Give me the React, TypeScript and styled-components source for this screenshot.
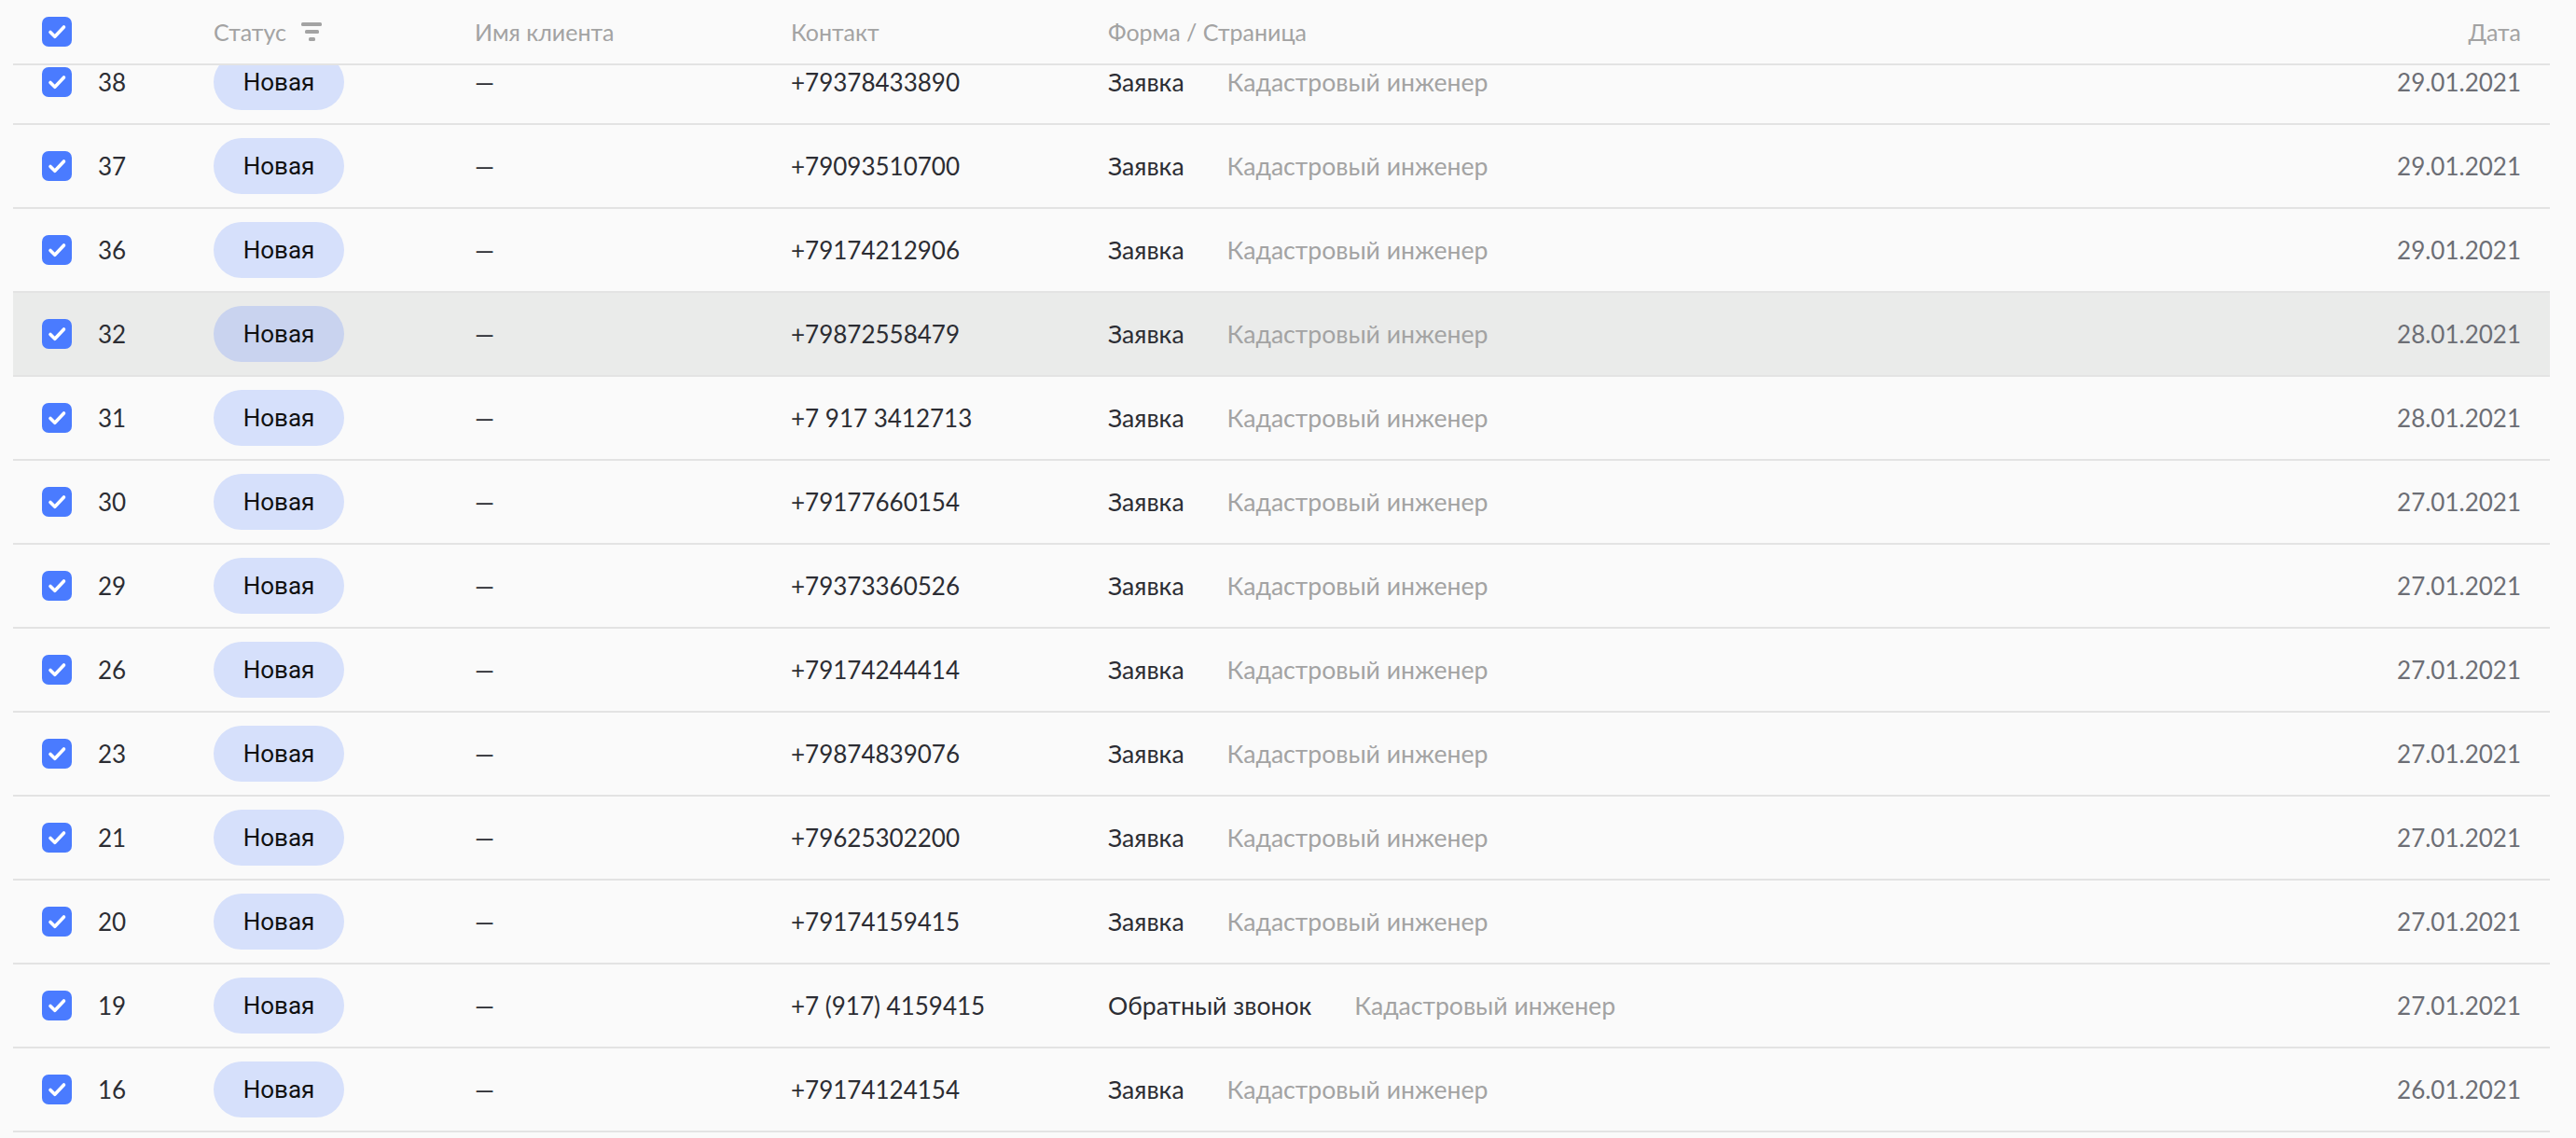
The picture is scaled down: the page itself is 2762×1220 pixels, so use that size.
import styled, { createGlobalStyle } from "styled-components";

type Lead = {
  id: number;
  phone: string;
  form: string;
  date: string;
};

const leads: Lead[] = [
  { id: 38, phone: "+79378433890", form: "Заявка", date: "29.01.2021" },
  { id: 37, phone: "+79093510700", form: "Заявка", date: "29.01.2021" },
  { id: 36, phone: "+79174212906", form: "Заявка", date: "29.01.2021" },
  { id: 32, phone: "+79872558479", form: "Заявка", date: "28.01.2021" },
  { id: 31, phone: "+7 917 3412713", form: "Заявка", date: "28.01.2021" },
  { id: 30, phone: "+79177660154", form: "Заявка", date: "27.01.2021" },
  { id: 29, phone: "+79373360526", form: "Заявка", date: "27.01.2021" },
  { id: 26, phone: "+79174244414", form: "Заявка", date: "27.01.2021" },
  { id: 23, phone: "+79874839076", form: "Заявка", date: "27.01.2021" },
  { id: 21, phone: "+79625302200", form: "Заявка", date: "27.01.2021" },
  { id: 20, phone: "+79174159415", form: "Заявка", date: "27.01.2021" },
  { id: 19, phone: "+7 (917) 4159415", form: "Обратный звонок", date: "27.01.2021" },
  { id: 16, phone: "+79174124154", form: "Заявка", date: "26.01.2021" },
];

const HOVERED_ID = 32;

const GlobalStyle = createGlobalStyle`
  html, body {
    margin: 0;
    padding: 0;
    background: #fafafa;
  }
  body {
    font-family: Lato, "Liberation Sans", sans-serif;
    color: #2c2d33;
    overflow: hidden;
  }
`;

const Checkbox = () => (
  <StyledCheckbox>
    <svg width="32" height="32" viewBox="0 0 32 32">
      <rect width="32" height="32" rx="7" fill="#4a7bff" />
      <path
        d="M9 16.5l4.8 4.8L23.5 11"
        fill="none"
        stroke="#fff"
        strokeWidth="3.6"
        strokeLinecap="round"
        strokeLinejoin="round"
      />
    </svg>
  </StyledCheckbox>
);

const FilterIcon = () => (
  <svg width="22" height="20" viewBox="0 0 22 20">
    <rect x="0" y="0" width="22" height="4" rx="1.5" fill="#a3a3a3" />
    <rect x="4" y="8" width="15" height="4" rx="1.5" fill="#a3a3a3" />
    <rect x="8" y="16" width="7" height="4" rx="1.5" fill="#a3a3a3" />
  </svg>
);

const LeadRow = ({ lead, hovered }: { lead: Lead; hovered: boolean }) => (
  <StyledRow hovered={hovered}>
    <Checkbox />
    <span className="num">{lead.id}</span>
    <div>
      <StatusPill hovered={hovered}>Новая</StatusPill>
    </div>
    <span className="name">—</span>
    <span className="phone">{lead.phone}</span>
    <div className="form">
      <span className="form-name">{lead.form}</span>
      <span className="page">Кадастровый инженер</span>
    </div>
    <span className="date">{lead.date}</span>
  </StyledRow>
);

const App = () => {
  return (
    <>
      <GlobalStyle />
      <Page>
        <Table>
          <HeaderRow>
            <Checkbox />
            <span />
            <span className="sortable">
              Статус
              <FilterIcon />
            </span>
            <span>Имя клиента</span>
            <span>Контакт</span>
            <span>Форма / Страница</span>
            <span className="right">Дата</span>
          </HeaderRow>
          <Body>
            {leads.map((lead) => (
              <LeadRow key={lead.id} lead={lead} hovered={lead.id === HOVERED_ID} />
            ))}
          </Body>
        </Table>
      </Page>
    </>
  );
};

export default App;

const columns = "60px 124px 280px 339px 340px 1fr auto";

const Page = styled.div`
  height: 1220px;
  padding: 0 28px 0 14px;
  overflow: hidden;
`;

const Table = styled.div`
  display: flex;
  flex-direction: column;
`;

const HeaderRow = styled.div`
  position: relative;
  z-index: 1;
  display: grid;
  grid-template-columns: ${columns};
  align-items: center;
  height: 68px;
  padding: 0 31px;
  background: #fafafa;
  border-bottom: 2px solid #e3e3e3;
  font-size: 25px;
  color: #a3a3a3;

  .sortable {
    display: flex;
    align-items: center;
    gap: 16px;
  }

  .right {
    text-align: right;
  }
`;

const Body = styled.div`
  margin-top: -26px;
`;

const StyledCheckbox = styled.span`
  display: flex;
  width: 32px;
  height: 32px;
`;

const StyledRow = styled.div<{ hovered: boolean }>`
  display: grid;
  grid-template-columns: ${columns};
  align-items: center;
  height: 88px;
  padding: 0 31px;
  border-bottom: 2px solid #e3e3e3;
  background: ${({ hovered }) => (hovered ? "#eaebea" : "transparent")};
  font-size: 26.6px;
  color: #2c2d33;

  .num,
  .phone {
    font-size: 26px;
  }

  .form {
    display: flex;
    gap: 46px;
  }

  .page {
    color: #a3a3a3;
  }

  .date {
    text-align: right;
    font-size: 26px;
    color: #6c6e75;
  }
`;

const StatusPill = styled.span<{ hovered: boolean }>`
  display: inline-flex;
  align-items: center;
  justify-content: center;
  width: 140px;
  height: 60px;
  border-radius: 30px;
  background: ${({ hovered }) => (hovered ? "#c9d3ef" : "#d6e0fb")};
  font-family: Roboto, "Liberation Sans", sans-serif;
  font-size: 26px;
  color: #111;
`;
